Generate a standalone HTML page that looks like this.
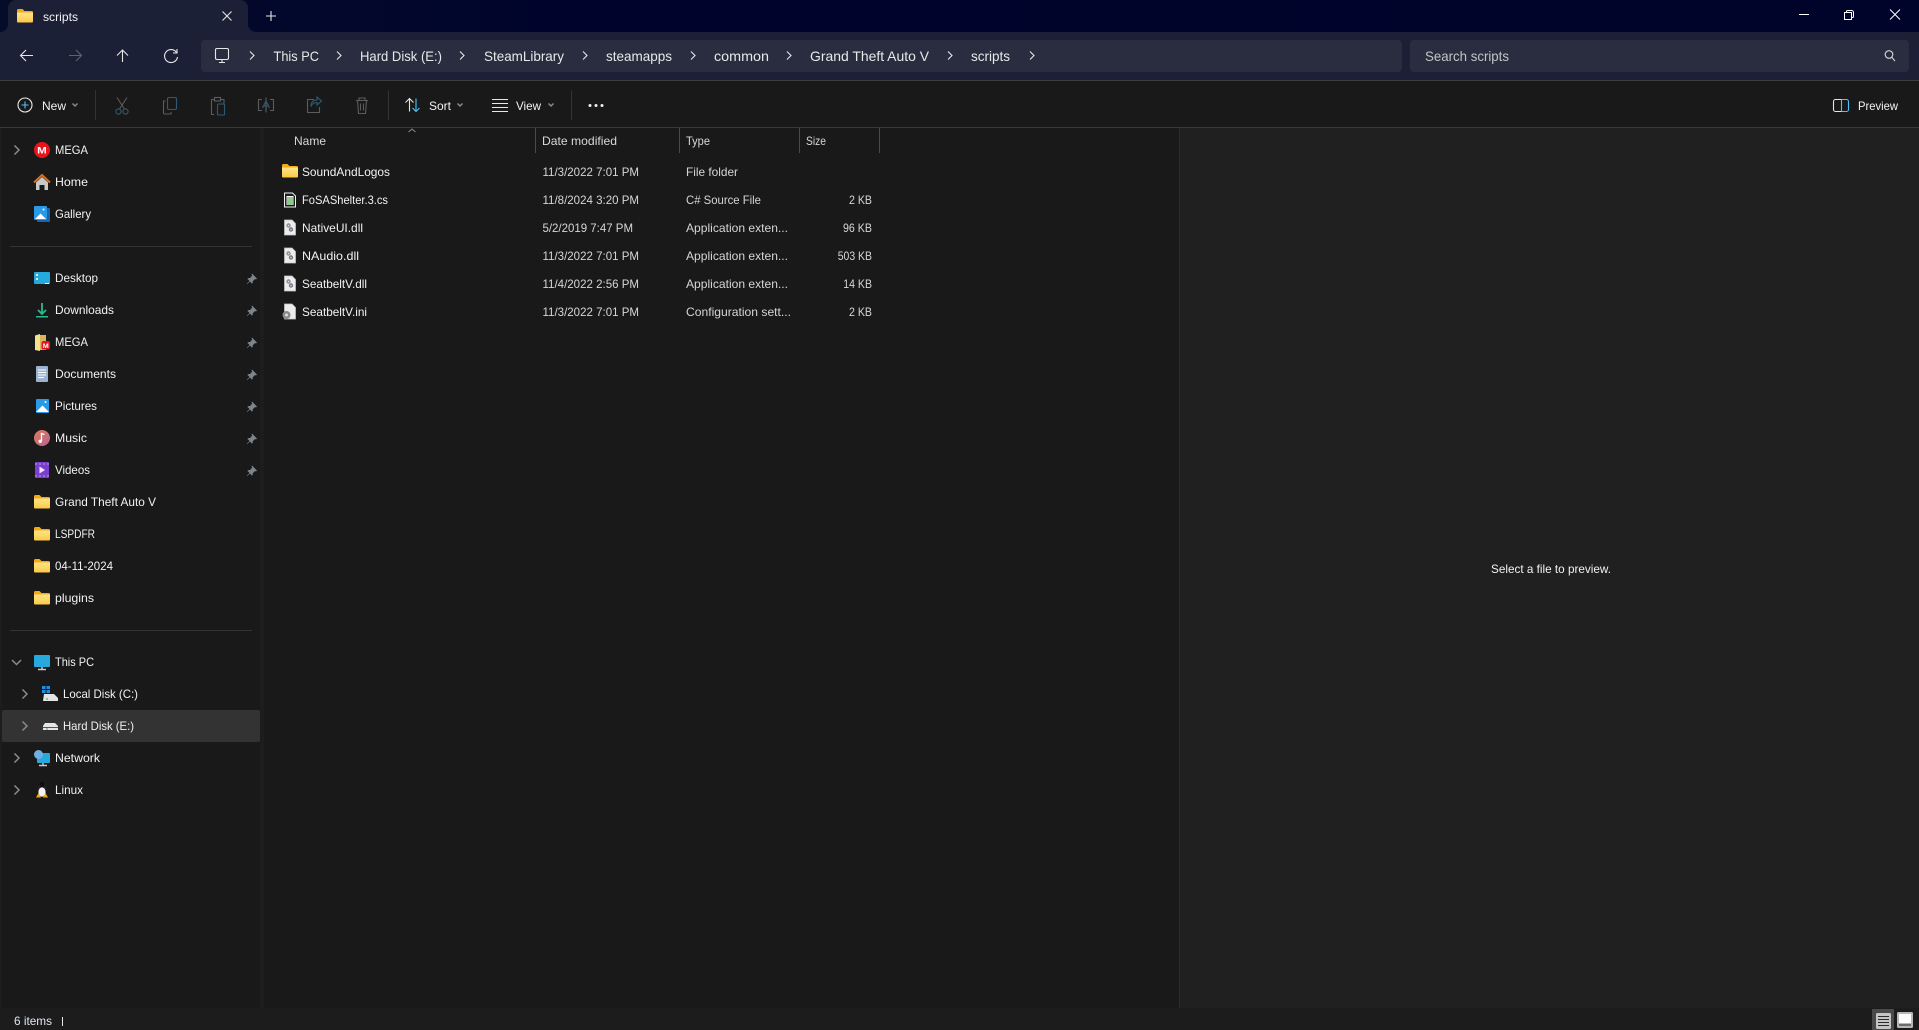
<!DOCTYPE html>
<html lang="en"><head><meta charset="utf-8"><title>scripts - File Explorer</title>
<style>
html,body{margin:0;padding:0;width:1919px;height:1030px;overflow:hidden;background:#191919}
svg{display:block;position:absolute;left:0;top:0}
text{font-family:"Liberation Sans",Arial,sans-serif;font-size:12px;fill:#f2f2f2}
.n{font-size:14px;fill:#e8e8e8}
.h{fill:#d8d8d8}
.d{fill:#d6d6d6}
.i{fill:none;stroke:#e6e6e6;stroke-width:1.1}
.o{fill:none;stroke:#5c5c5c;stroke-width:1.1}
.c{fill:none;stroke:#8a8a8a;stroke-width:1.5}
</style></head><body>
<svg width="1919" height="1030" viewBox="0 0 1919 1030" xmlns="http://www.w3.org/2000/svg">
<defs>
<linearGradient id="tb" x1="0" x2="1" y1="0" y2="0"><stop offset="0" stop-color="#050c2a"/><stop offset=".3" stop-color="#00042c"/><stop offset="1" stop-color="#00032a"/></linearGradient>
<linearGradient id="fo" x1="0" x2="0" y1="0" y2="1"><stop offset="0" stop-color="#ffe58a"/><stop offset="1" stop-color="#fbc845"/></linearGradient>
<linearGradient id="mu" x1="0" x2="1" y1="0" y2="1"><stop offset="0" stop-color="#e0785a"/><stop offset="1" stop-color="#b9668f"/></linearGradient>
<g id="folder"><path d="M0 2.500a1.500 1.500 0 0 1 1.500-1.500H5.500l2 2H14.500A1.500 1.500 0 0 1 16 4.500V6H0z" fill="#f4a918"/><path d="M0 4.500H16V13.500a1 1 0 0 1-1 1H1a1 1 0 0 1-1-1z" fill="url(#fo)"/></g>
<g id="pin"><path d="M5 0.500L10 5.500 9 6.500 8 6 5.800 8.200 5.500 10.500 4.800 10.500 2.800 8.500 0.500 11 0 10.500 2.500 8 0.600 6 0.600 5.300 3 5 5.200 2.800 4.500 1.800z" fill="#7d848a"/></g>
<g id="dll"><path d="M0.500 0.500H8L11.500 4V15.500H0.500z" fill="#ececec" stroke="#c8c8c8" stroke-width=".7"/><circle cx="4.500" cy="6" r="2.200" fill="#8a8f96"/><circle cx="4.500" cy="6" r=".8" fill="#e0e0e0"/><circle cx="7" cy="10" r="2.200" fill="#757b84"/><circle cx="7" cy="10" r=".8" fill="#d0d0d0"/></g>
</defs>

<rect width="1919" height="1030" fill="#191919"/>
<!-- title bar -->
<rect width="1919" height="32" fill="url(#tb)"/>
<path d="M0 32a8 8 0 0 0 8-8V8a8 8 0 0 1 8-8H240a8 8 0 0 1 8 8V24a8 8 0 0 0 8 8z" fill="#1b2036"/>
<use href="#folder" x="17" y="8"/>
<text x="43" y="21" textLength="35" lengthAdjust="spacingAndGlyphs">scripts</text>
<path d="M222.500 11.500L231.500 20.500M231.500 11.500L222.500 20.500" class="i"/>
<path d="M271 11V21M266 16H276" class="i"/>
<path d="M1799 14.500H1809" stroke="#fff" stroke-width="1" fill="none"/>
<path d="M1844.500 12.500h7v7h-7zM1846.500 12.500v-1a1 1 0 0 1 1-1h4a2 2 0 0 1 2 2v4a1 1 0 0 1-1 1h-1" fill="none" stroke="#fff" stroke-width="1"/>
<path d="M1890 9.500L1900 19.500M1900 9.500L1890 19.500" stroke="#fff" stroke-width="1" fill="none"/>

<!-- nav bar -->
<rect y="32" width="1919" height="48" fill="#1b2036"/>
<rect y="80" width="1919" height="1" fill="#3d3d40"/>
<path d="M33 55.500H21M26 50L20.500 55.500 26 61" class="i" stroke-width="1.200"/>
<path d="M69 55.500H81M76 50L81.500 55.500 76 61" fill="none" stroke="#5f6270" stroke-width="1.100"/>
<path d="M122.500 62V50M117 55.500L122.500 50 128 55.500" class="i"/>
<path d="M176.500 52.500A6.500 6.500 0 1 0 177.500 57M177 49V53H173" class="i"/>
<rect x="201" y="40" width="1201" height="32" rx="4" fill="#2a2d3f"/>
<rect x="1410" y="40" width="499" height="32" rx="4" fill="#2a2d3f"/>
<rect x="215.500" y="48.500" width="13" height="11" rx="1.500" class="i"/>
<path d="M219 62.500H225M222 59.500V62.500" class="i"/>
<g class="i" stroke-width="1"><path d="M250 51.500L254 55.500 250 59.500M337 51.500L341 55.500 337 59.500M460 51.500L464 55.500 460 59.500M583 51.500L587 55.500 583 59.500M691 51.500L695 55.500 691 59.500M787 51.500L791 55.500 787 59.500M948 51.500L952 55.500 948 59.500M1030 51.500L1034 55.500 1030 59.500"/></g>
<text class="n" x="273.500" y="61" textLength="45.500" lengthAdjust="spacingAndGlyphs">This PC</text>
<text class="n" x="360" y="61" textLength="82" lengthAdjust="spacingAndGlyphs">Hard Disk (E:)</text>
<text class="n" x="484" y="61" textLength="80" lengthAdjust="spacingAndGlyphs">SteamLibrary</text>
<text class="n" x="606" y="61" textLength="66" lengthAdjust="spacingAndGlyphs">steamapps</text>
<text class="n" x="714" y="61" textLength="55" lengthAdjust="spacingAndGlyphs">common</text>
<text class="n" x="810" y="61" textLength="119" lengthAdjust="spacingAndGlyphs">Grand Theft Auto V</text>
<text class="n" x="971" y="61" textLength="39" lengthAdjust="spacingAndGlyphs">scripts</text>
<text class="n" x="1425" y="61" textLength="84" lengthAdjust="spacingAndGlyphs" style="fill:#c4c4c8">Search scripts</text>
<circle cx="1889" cy="54.500" r="3.800" fill="none" stroke="#d8d8d8" stroke-width="1.100"/><path d="M1891.800 57.300L1895 61" fill="none" stroke="#d8d8d8" stroke-width="1.100"/>

<!-- command bar -->
<rect y="81" width="1919" height="46" fill="#191919"/>
<rect y="127" width="1919" height="1" fill="#3a3a3a"/>
<rect x="95" y="90" width="1" height="30" fill="#333"/><rect x="388" y="90" width="1" height="30" fill="#333"/><rect x="571" y="90" width="1" height="30" fill="#333"/>
<circle cx="25" cy="105" r="7" fill="none" stroke="#e6e6e6" stroke-width="1.100"/><path d="M25 101.500V108.500M21.500 105H28.500" stroke="#4cc2ff" stroke-width="1.100" fill="none"/>
<text x="42" y="110" textLength="24" lengthAdjust="spacingAndGlyphs">New</text>
<path d="M72.500 103.500L75 106 77.500 103.500" class="c" stroke-width="1"/>
<!-- disabled icons -->
<g fill="none" stroke-width="1.100">
<path d="M117 97.500L124.500 109M127 97.500L119.500 109" stroke="#5c5c5c"/><circle cx="118.500" cy="111.500" r="2.600" stroke="#2f5a75"/><circle cx="125.500" cy="111.500" r="2.600" stroke="#2f5a75"/>
<path d="M165.500 101h-2v11.500a1.500 1.500 0 0 0 1.500 1.500h6v-2" stroke="#5c5c5c"/><rect x="167.500" y="97.500" width="9" height="12" rx="1.500" stroke="#2f5a75"/>
<path d="M214 114.500h-2.500v-15h3M221 99.500h3v4" stroke="#5c5c5c"/><rect x="214.500" y="97.500" width="6" height="3.500" stroke="#5c5c5c"/><rect x="217.500" y="104" width="7" height="11" rx="1" stroke="#2f5a75"/>
<path d="M262 99.500h-3.500v11H262M270 99.500h3.500v11H270M266 97.500v15" stroke="#5c5c5c"/><path d="M262.500 108L266 101l3.500 7M263.500 106h5" stroke="#2f5a75"/>
<path d="M314 99.500h-6.500v13h12V107" stroke="#5c5c5c"/><path d="M317 97l4.500 4-4.500 4v-2.500c-3 0-5 1-6 4 0-4 2-6.500 6-6.500z" stroke="#2f5a75"/>
<path d="M356 100.500H368M359 100.500V98h6v2.500M357.500 100.500L358.500 113.500h7L366.500 100.500M360.500 103.500v7M363.500 103.500v7" stroke="#5c5c5c"/>
</g>
<!-- sort -->
<path d="M409.500 111.500V98.500M405.500 102.500L409.500 98.500 413.500 102.500" class="i"/>
<path d="M416 98.500V111.500M412.500 108L416 111.500 419.500 108" fill="none" stroke="#4cc2ff" stroke-width="1.100"/>
<text x="429" y="110" textLength="22" lengthAdjust="spacingAndGlyphs">Sort</text>
<path d="M457.500 103.500L460 106 462.500 103.500" class="c" stroke-width="1"/>
<path d="M492 99.500H508M492 103.500H508M492 107.500H508M492 111.500H508" class="i" stroke-width="1"/>
<text x="516" y="110" textLength="25" lengthAdjust="spacingAndGlyphs">View</text>
<path d="M548.500 103.500L551 106 553.500 103.500" class="c" stroke-width="1"/>
<circle cx="590" cy="105.500" r="1.500" fill="#f0f0f0"/><circle cx="596" cy="105.500" r="1.500" fill="#f0f0f0"/><circle cx="602" cy="105.500" r="1.500" fill="#f0f0f0"/>
<path d="M1841.500 99.500H1835.500a2 2 0 0 0-2 2v8a2 2 0 0 0 2 2h6" class="i"/><path d="M1841.500 99.500V111.500M1841.500 99.500h5a2 2 0 0 1 2 2v8a2 2 0 0 1-2 2h-5" fill="none" stroke="#4cc2ff" stroke-width="1.100"/>
<text x="1858" y="110" textLength="40" lengthAdjust="spacingAndGlyphs">Preview</text>

<!-- sidebar -->
<rect x="0" y="128" width="262" height="880" fill="#191919"/>
<rect x="260" y="128" width="4" height="880" fill="#1d1d1d"/>
<rect x="0" y="128" width="2" height="880" fill="#1d1d1d"/>
<rect x="10" y="246" width="242" height="1" fill="#333"/>
<rect x="10" y="630" width="242" height="1" fill="#333"/>
<rect x="2" y="710" width="258" height="32" rx="2" fill="#333"/>

<g class="c"><path d="M14.500 145.500L19 150 14.500 154.500"/><path d="M14.500 753.500L19 758 14.500 762.500"/><path d="M14.500 785.500L19 790 14.500 794.500"/><path d="M22.500 689.500L27 694 22.500 698.500"/><path d="M22.500 721.500L27 726 22.500 730.500"/><path d="M12 660L16.500 664.500 21 660"/></g>

<!-- nav icons -->
<circle cx="42" cy="150" r="8" fill="#e8141c"/><text x="37.200" y="153.500" style="font-size:9.500px;font-weight:bold;fill:#fff" textLength="9.600" lengthAdjust="spacingAndGlyphs">M</text>
<path d="M36 182.500L42 177 48 182.500V190H44.500V185H39.500V190H36z" fill="#c9c9c9"/><path d="M34 182.500L42 175 50 182.500" fill="none" stroke="#d9701f" stroke-width="2"/>
<rect x="37" y="208" width="13" height="14" rx="1" fill="#1565b0"/><rect x="34" y="206" width="13" height="14" rx="1" fill="#2a9ae6"/><path d="M35 219L40.500 213.500 46 219z" fill="#fff"/><circle cx="43.500" cy="209.500" r="1" fill="#fff"/>
<rect x="34" y="272" width="16" height="12" rx="1" fill="#27a9de"/><rect x="36" y="274" width="2" height="2" fill="#d6f2fb"/><rect x="36" y="278" width="2" height="2" fill="#d6f2fb"/><rect x="45" y="283" width="4" height="1" fill="#fff"/>
<path d="M42 303V314M38 310L42 314 46 310" fill="none" stroke="#2bb88f" stroke-width="1.800"/><rect x="36" y="316" width="12" height="1.500" fill="#2bb88f"/>
<path d="M35 335.500L40 334V351L35 350z" fill="#f5e18c"/><rect x="40" y="335" width="6" height="15" fill="#d7b75e"/><rect x="41.500" y="341" width="8.500" height="8.500" rx="2" fill="#e8141c"/><text x="42.800" y="348" style="font-size:6.500px;font-weight:bold;fill:#fff" textLength="6" lengthAdjust="spacingAndGlyphs">M</text>
<rect x="36" y="366" width="12" height="16" rx="1" fill="#9cb3cf"/><path d="M38 370H46M38 372.500H46M38 375H46M38 377.500H44" stroke="#fff" stroke-width="1" fill="none"/>
<rect x="36" y="399" width="13" height="14" rx="1" fill="#2a9ae6"/><path d="M36 412L42.500 405.500 49 412z" fill="#fff"/><circle cx="45.500" cy="402" r="1" fill="#fff"/>
<circle cx="42" cy="438" r="8" fill="url(#mu)"/><path d="M41.500 441V433.500l3 1" fill="none" stroke="#fff" stroke-width="1.300"/><circle cx="40.200" cy="441.300" r="1.700" fill="#fff"/>
<rect x="35" y="462" width="14" height="16" rx="1" fill="#7b3fd0"/><path d="M35 464h14M35 476h14" stroke="#b79be8" stroke-width="1" stroke-dasharray="2 2"/><path d="M39.500 466.500V473.500L45 470z" fill="#f0e8ff"/>
<use href="#folder" x="34" y="494"/><use href="#folder" x="34" y="526"/><use href="#folder" x="34" y="558"/><use href="#folder" x="34" y="590"/>
<rect x="34" y="655" width="16" height="12" rx="1" fill="#27a9de"/><path d="M38 669.500H46M42 667V669.500" stroke="#c9c9c9" stroke-width="1.500" fill="none"/>
<rect x="42" y="686" width="3.500" height="3" fill="#1a8fe3"/><rect x="46.500" y="686" width="3.500" height="3" fill="#1a8fe3"/><rect x="42" y="690" width="3.500" height="3" fill="#1a8fe3"/><rect x="46.500" y="690" width="3.500" height="3" fill="#1a8fe3"/>
<path d="M44 694H54L58 698V701H43z" fill="#e4e4e4"/><rect x="46" y="698.500" width="2" height="1" fill="#3ba55c"/>
<path d="M45 723H55L58 726V730H43V726z" fill="#e6e6e6"/><rect x="43" y="727" width="15" height="1" fill="#555"/><rect x="46" y="728.500" width="2" height="1" fill="#3ba55c"/>
<rect x="37" y="753" width="13" height="10" rx="1" fill="#27a9de"/><circle cx="38.500" cy="754.500" r="4.500" fill="#6fb0e4"/><path d="M39 765.500H47M43 763V765.500" stroke="#c9c9c9" stroke-width="1.400" fill="none"/>
<ellipse cx="42" cy="789.500" rx="4.500" ry="7.500" fill="#202020"/><ellipse cx="42" cy="792" rx="3.600" ry="4.600" fill="#f4f4f4"/><ellipse cx="42" cy="784.500" rx="2.500" ry="2.500" fill="#0c0c0c"/><path d="M36 797.500L38.500 793 41 797.500zM48 797.500L45.500 793 43 797.500z" fill="#f1a81c"/>

<g>
<use href="#pin" x="247" y="273"/><use href="#pin" x="247" y="305"/><use href="#pin" x="247" y="337"/><use href="#pin" x="247" y="369"/><use href="#pin" x="247" y="401"/><use href="#pin" x="247" y="433"/><use href="#pin" x="247" y="465"/>
</g>

<text x="55" y="154" textLength="33" lengthAdjust="spacingAndGlyphs">MEGA</text>
<text x="55" y="186" textLength="33" lengthAdjust="spacingAndGlyphs">Home</text>
<text x="55" y="218" textLength="36" lengthAdjust="spacingAndGlyphs">Gallery</text>
<text x="55" y="282" textLength="43" lengthAdjust="spacingAndGlyphs">Desktop</text>
<text x="55" y="314" textLength="59" lengthAdjust="spacingAndGlyphs">Downloads</text>
<text x="55" y="346" textLength="33" lengthAdjust="spacingAndGlyphs">MEGA</text>
<text x="55" y="378" textLength="61" lengthAdjust="spacingAndGlyphs">Documents</text>
<text x="55" y="410" textLength="42" lengthAdjust="spacingAndGlyphs">Pictures</text>
<text x="55" y="442" textLength="32" lengthAdjust="spacingAndGlyphs">Music</text>
<text x="55" y="474" textLength="35" lengthAdjust="spacingAndGlyphs">Videos</text>
<text x="55" y="506" textLength="101" lengthAdjust="spacingAndGlyphs">Grand Theft Auto V</text>
<text x="55" y="538" textLength="40" lengthAdjust="spacingAndGlyphs">LSPDFR</text>
<text x="55" y="570" textLength="58" lengthAdjust="spacingAndGlyphs">04-11-2024</text>
<text x="55" y="602" textLength="39" lengthAdjust="spacingAndGlyphs">plugins</text>
<text x="55" y="666" textLength="39" lengthAdjust="spacingAndGlyphs">This PC</text>
<text x="63" y="698" textLength="75" lengthAdjust="spacingAndGlyphs">Local Disk (C:)</text>
<text x="63" y="730" textLength="71" lengthAdjust="spacingAndGlyphs">Hard Disk (E:)</text>
<text x="55" y="762" textLength="45" lengthAdjust="spacingAndGlyphs">Network</text>
<text x="55" y="794" textLength="28" lengthAdjust="spacingAndGlyphs">Linux</text>

<!-- file list headers -->
<path d="M408.500 132L412 129 415.500 132" fill="none" stroke="#8a8a8a" stroke-width="1"/>
<rect x="535" y="128" width="1" height="25" fill="#4a4a4a"/><rect x="679" y="128" width="1" height="25" fill="#4a4a4a"/><rect x="799" y="128" width="1" height="25" fill="#4a4a4a"/><rect x="879" y="128" width="1" height="25" fill="#4a4a4a"/>
<text class="h" x="294" y="145" textLength="32" lengthAdjust="spacingAndGlyphs">Name</text>
<text class="h" x="542" y="145" textLength="75" lengthAdjust="spacingAndGlyphs">Date modified</text>
<text class="h" x="686" y="145" textLength="24" lengthAdjust="spacingAndGlyphs">Type</text>
<text class="h" x="806" y="145" textLength="20" lengthAdjust="spacingAndGlyphs">Size</text>

<!-- file rows -->
<use href="#folder" x="282" y="163"/>
<g transform="translate(284 192.500)"><path d="M0.500 0.500H8.500L11.500 3.500V14.500H0.500z" fill="#1c1c1c" stroke="#f2f2f2" stroke-width="1"/><rect x="2.500" y="3.500" width="7" height="9" fill="#f6f6f6"/><path d="M3 5.500H9M3 7.500H9M3 9.500H9M3 11.500H9" stroke="#2f962f" stroke-width="1.100"/></g>
<use href="#dll" x="284" y="219.500"/><use href="#dll" x="284" y="247.500"/><use href="#dll" x="284" y="275.500"/>
<g transform="translate(284 303.500)"><path d="M0.500 0.500H8L11.500 4V15.500H0.500z" fill="#ececec" stroke="#c8c8c8" stroke-width=".7"/><circle cx="2.500" cy="11.500" r="4" fill="#8a8a8a"/><circle cx="2.500" cy="11.500" r="1.500" fill="#dcdcdc"/></g>

<g>
<text x="302" y="176" textLength="88" lengthAdjust="spacingAndGlyphs">SoundAndLogos</text>
<text x="302" y="204" textLength="86" lengthAdjust="spacingAndGlyphs">FoSAShelter.3.cs</text>
<text x="302" y="232" textLength="61" lengthAdjust="spacingAndGlyphs">NativeUI.dll</text>
<text x="302" y="260" textLength="57" lengthAdjust="spacingAndGlyphs">NAudio.dll</text>
<text x="302" y="288" textLength="65" lengthAdjust="spacingAndGlyphs">SeatbeltV.dll</text>
<text x="302" y="316" textLength="65" lengthAdjust="spacingAndGlyphs">SeatbeltV.ini</text>
</g>
<g>
<text class="d" x="542.500" y="176" textLength="96.500" lengthAdjust="spacingAndGlyphs">11/3/2022 7:01 PM</text>
<text class="d" x="542.500" y="204" textLength="96.500" lengthAdjust="spacingAndGlyphs">11/8/2024 3:20 PM</text>
<text class="d" x="542.500" y="232" textLength="90.500" lengthAdjust="spacingAndGlyphs">5/2/2019 7:47 PM</text>
<text class="d" x="542.500" y="260" textLength="96.500" lengthAdjust="spacingAndGlyphs">11/3/2022 7:01 PM</text>
<text class="d" x="542.500" y="288" textLength="96.500" lengthAdjust="spacingAndGlyphs">11/4/2022 2:56 PM</text>
<text class="d" x="542.500" y="316" textLength="96.500" lengthAdjust="spacingAndGlyphs">11/3/2022 7:01 PM</text>
<text class="d" x="686" y="176" textLength="52" lengthAdjust="spacingAndGlyphs">File folder</text>
<text class="d" x="686" y="204" textLength="75" lengthAdjust="spacingAndGlyphs">C# Source File</text>
<text class="d" x="686" y="232" textLength="102" lengthAdjust="spacingAndGlyphs">Application exten...</text>
<text class="d" x="686" y="260" textLength="102" lengthAdjust="spacingAndGlyphs">Application exten...</text>
<text class="d" x="686" y="288" textLength="102" lengthAdjust="spacingAndGlyphs">Application exten...</text>
<text class="d" x="686" y="316" textLength="105" lengthAdjust="spacingAndGlyphs">Configuration sett...</text>
<text class="d" x="849" y="204" textLength="23" lengthAdjust="spacingAndGlyphs">2 KB</text>
<text class="d" x="843" y="232" textLength="29" lengthAdjust="spacingAndGlyphs">96 KB</text>
<text class="d" x="837.700" y="260" textLength="34.300" lengthAdjust="spacingAndGlyphs">503 KB</text>
<text class="d" x="843.300" y="288" textLength="28.700" lengthAdjust="spacingAndGlyphs">14 KB</text>
<text class="d" x="849" y="316" textLength="23" lengthAdjust="spacingAndGlyphs">2 KB</text>
</g>

<!-- preview pane -->
<rect x="1180" y="128" width="739" height="880" fill="#202020"/>
<rect x="1179" y="128" width="1" height="880" fill="#2a2a2a"/>
<text x="1491" y="573" textLength="120" lengthAdjust="spacingAndGlyphs">Select a file to preview.</text>

<!-- status bar -->
<rect y="1008" width="1919" height="22" fill="#1c1c1c"/>
<text x="14" y="1025" textLength="38" lengthAdjust="spacingAndGlyphs" style="fill:#dde6f0">6 items</text>
<rect x="62" y="1017" width="1" height="9" fill="#e8e8e8"/>
<rect x="1872" y="1009" width="22" height="21" fill="#4a4a4a"/>
<rect x="1876" y="1013" width="15" height="16" rx="1.500" fill="#c4c4c4"/>
<path d="M1878 1016.500H1889M1878 1019.500H1889M1878 1022.500H1889M1878 1025.500H1889" stroke="#2a2a2a" stroke-width="1"/>
<rect x="1897" y="1012" width="16" height="16" rx="1.500" fill="#b8b8b8"/>
<rect x="1899" y="1014" width="12" height="9" fill="#fff"/><rect x="1899" y="1024.500" width="12" height="1" fill="#222"/>
</svg>
</body></html>
